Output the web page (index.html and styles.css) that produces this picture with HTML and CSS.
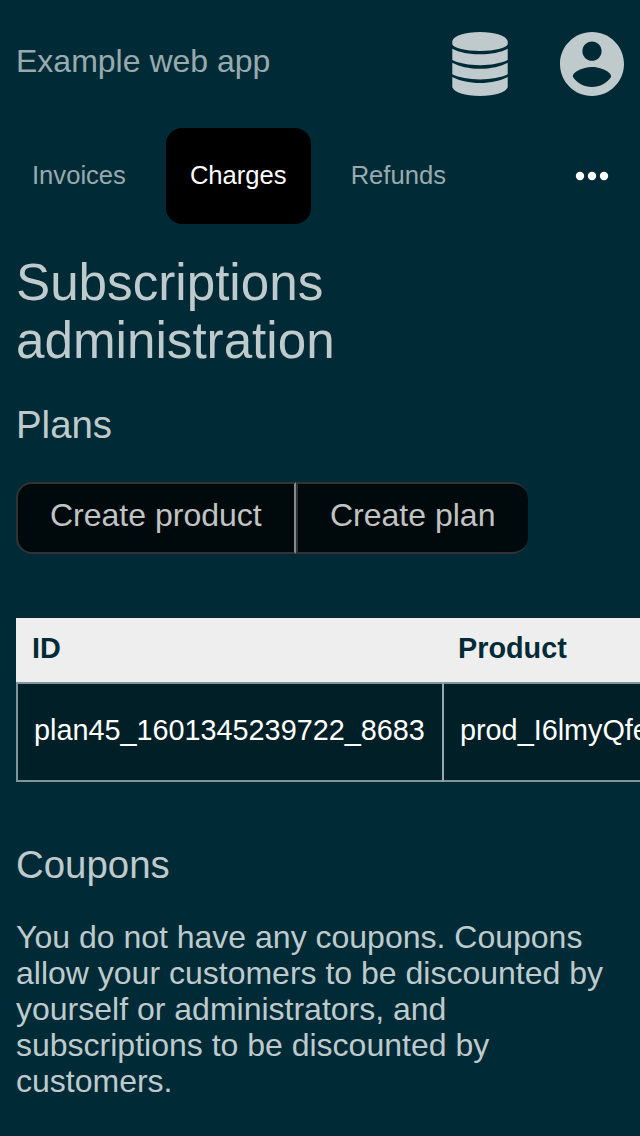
FILE: index.html
```html
<!DOCTYPE html>
<html lang="en">
<head>
<meta charset="utf-8">
<title>Subscriptions administration</title>
<link rel="stylesheet" href="styles.css">
</head>
<body>
<header class="header">
  <div class="brand">Example web app</div>
  <div class="menus">
    <svg class="database" viewBox="0 0 56 64"><path d="M.3 9C2 3.500 13 0 28 0s26 3.500 27.700 9v3.500C54 16 43 19 28 19S2 16 .3 12.500zM.3 16.700C7 20.300 17 22.300 28 22.300s21-2 27.700-5.600V28C49 31.300 39 33.200 28 33.200S7 31.300 .3 28zM.3 30.700C7 34.300 17 36.800 28 36.800s21-2.500 27.700-6.100V42.300C49 45.600 39 47.400 28 47.400S7 45.600 .3 42.300zM.3 45C7 48.600 17 51 28 51s21-2.400 27.700-6V55.300C54 60.500 43 64 28 64S2 60.500 .3 55.300z"/></svg>
    <svg class="account" viewBox="2 2 20 20"><path d="M12 2C6.480 2 2 6.480 2 12s4.480 10 10 10 10-4.480 10-10S17.520 2 12 2zm0 3c1.660 0 3 1.340 3 3s-1.340 3-3 3-3-1.340-3-3 1.340-3 3-3zm0 14.200c-2.500 0-4.710-1.280-6-3.220.03-1.990 4-3.080 6-3.080 1.990 0 5.970 1.090 6 3.080-1.290 1.940-3.500 3.220-6 3.220z"/></svg>
  </div>
</header>
<nav class="nav">
  <a class="tab">Invoices</a>
  <a class="tab active">Charges</a>
  <a class="tab">Refunds</a>
  <svg class="more" viewBox="0 0 34 10"><circle cx="5" cy="5" r="4.200"/><circle cx="17" cy="5" r="4.200"/><circle cx="29" cy="5" r="4.200"/></svg>
</nav>
<main class="content">
  <h1 class="title">Subscriptions administration</h1>
  <h2 class="subtitle">Plans</h2>
  <div class="buttons">
    <a class="button first">Create product</a>
    <a class="button last">Create plan</a>
  </div>
  <div class="table">
    <div class="th">ID</div>
    <div class="th">Product</div>
    <div class="td">plan45_1601345239722_8683</div>
    <div class="td next">prod_I6lmyQfe</div>
  </div>
  <h2 class="subtitle">Coupons</h2>
  <p class="text">You do not have any coupons. Coupons allow your customers to be discounted by yourself or administrators, and subscriptions to be discounted by customers.</p>
</main>
</body>
</html>
```

FILE: styles.css
```css
* {
  box-sizing: border-box;
}

body {
  margin: 0;
  height: 1136px;
  overflow: hidden;
  background: #002b36;
  color: #bfcacd;
  font: 32px/36px "Liberation Sans", Arial, sans-serif;
}

.header {
  display: flex;
  justify-content: space-between;
  height: 128px;
  padding: 32px 16px 0;
}

.brand {
  padding-top: 11px;
  color: #99aaaf;
}

.menus {
  display: flex;
  gap: 52px;
  fill: #bfcacd;
}

.database {
  width: 56px;
  height: 64px;
}

.account {
  width: 64px;
  height: 64px;
}

.nav {
  display: flex;
  align-items: center;
  height: 96px;
  padding: 0 31px 0 8px;
  font-size: 25.6px;
  color: #99aaaf;
}

.tab {
  height: 96px;
  margin-right: 16px;
  padding: 0 24px;
  line-height: 94px;
}

.active {
  border-radius: 16px;
  background: #000;
  color: #fff;
}

.more {
  width: 34px;
  height: 10px;
  margin-left: auto;
  fill: #fff;
}

.content {
  padding: 30px 16px 0;
}

.title {
  margin: 0 0 33px;
  font-size: 51.2px;
  font-weight: 400;
  line-height: 58px;
}

.subtitle {
  margin: 0;
  font-size: 38.4px;
  font-weight: 400;
  line-height: 44px;
}

.buttons {
  display: flex;
  margin: 35px 0 64px;
  color: #c1c3c4;
}

.button {
  height: 72px;
  padding: 13px 32px 0;
  border: 2px solid #333;
  background: #00090b;
}

.first {
  width: 280px;
  border-right-color: #808c8c;
  border-radius: 16px 0 0 16px;
}

.last {
  width: 232px;
  border-right: 0;
  border-radius: 0 16px 16px 0;
}

.table {
  display: grid;
  grid-template-columns: 426px 198px;
  grid-template-rows: 64px 100px;
  width: 624px;
  margin-bottom: 61px;
  font-size: 28.8px;
}

.th {
  padding: 0 16px;
  background: #eee;
  color: #002b36;
  font-weight: 700;
  line-height: 61px;
}

.td {
  padding: 0 0 0 16px;
  border: solid #80959a;
  border-width: 2px 0 2px 2px;
  background: #001f27;
  color: #fff;
  line-height: 93px;
  white-space: nowrap;
}

.next {
  overflow: hidden;
  border-left-color: #99a8ac;
}

.text {
  margin: 32px 0 0;
}
```
